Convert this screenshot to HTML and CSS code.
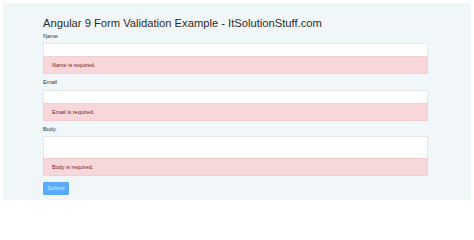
FILE: index.html
```html
<!DOCTYPE html>
<html>
<head>
<meta charset="utf-8">
<link rel="stylesheet" href="styles.css">
</head>
<body>
<div class="frame">
  <div class="container">
    <h1 class="title">Angular 9 Form Validation Example - ItSolutionStuff.com</h1>
    <form class="form">
      <div class="group">
        <label class="label">Name</label>
        <input class="control" type="text">
        <div class="alert">Name is required.</div>
      </div>
      <div class="group">
        <label class="label">Email</label>
        <input class="control" type="text">
        <div class="alert">Email is required.</div>
      </div>
      <div class="group">
        <label class="label">Body</label>
        <textarea class="control area"></textarea>
        <div class="alert">Body is required.</div>
      </div>
      <button class="btn" type="button">Submit</button>
    </form>
  </div>
</div>
</body>
</html>
```
FILE: styles.css
```css
html, body {
  margin: 0;
  padding: 0;
  background: #ffffff;
}
body {
  font-family: "Liberation Sans", Arial, sans-serif;
  color: #212529;
}
.frame {
  margin: 3px 3px 0 3px;
  height: 197px;
  background: #f1f7f9;
  box-sizing: border-box;
}
.container {
  width: 385px;
  margin: 0 auto;
  padding-top: 13px;
  position: relative;
  left: -1.5px;
}
.title {
  margin: 0 0 2.5px 0;
  font-weight: normal;
  font-size: 11.2px;
  line-height: 14px;
  color: #2b2b2b;
}
.form {
  display: flex;
  flex-direction: column;
}
.group {
  display: flex;
  flex-direction: column;
  margin-bottom: 5px;
}
.label {
  font-size: 5.6px;
  line-height: 7px;
  margin-bottom: 3.5px;
  color: #333;
}
.control {
  display: block;
  box-sizing: border-box;
  width: 100%;
  height: 13px;
  margin: 0;
  padding: 0;
  border: 1px solid #e4e8eb;
  border-bottom: none;
  background: #ffffff;
  outline: none;
}
.area {
  height: 21.5px;
  resize: none;
}
.alert {
  box-sizing: border-box;
  height: 18px;
  padding: 0 8px;
  display: flex;
  align-items: center;
  background: #f8d7da;
  border: 1px solid #f5ccd0;
  color: #721c24;
  font-size: 5.5px;
}
.btn {
  align-self: flex-start;
  margin-top: 1px;
  width: 26px;
  height: 13px;
  padding: 0;
  border: 1px solid #5aa9f8;
  border-radius: 1px;
  background: #5aaafb;
  color: #dbeeff;
  font-family: "Liberation Sans", Arial, sans-serif;
  font-size: 5.5px;
}
```
